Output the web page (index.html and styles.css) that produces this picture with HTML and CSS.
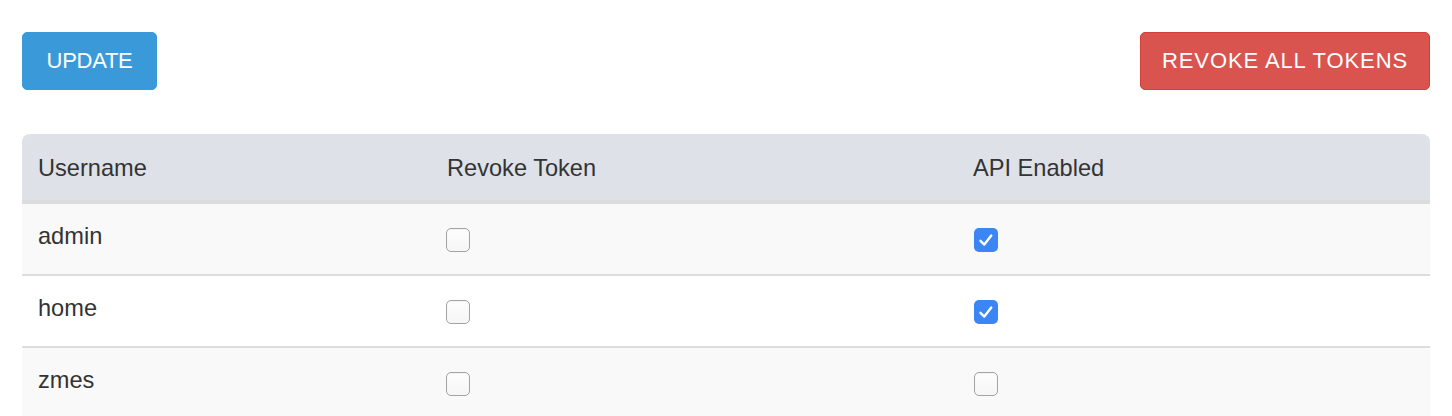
FILE: index.html
```html
<!DOCTYPE html>
<html>
<head>
<meta charset="utf-8">
<link rel="stylesheet" href="styles.css">
</head>
<body>
<div class="page">
  <div class="toolbar">
    <button class="btn btn-blue">UPDATE</button>
    <button class="btn btn-red">REVOKE ALL TOKENS</button>
  </div>
  <table class="tokens">
    <colgroup>
      <col class="c1"><col class="c2"><col class="c3">
    </colgroup>
    <thead>
      <tr><th>Username</th><th>Revoke Token</th><th>API Enabled</th></tr>
    </thead>
    <tbody>
      <tr>
        <td>admin</td>
        <td><span class="cb"></span></td>
        <td><span class="cb on"><svg viewBox="0 0 24 24" width="24" height="24"><path d="M6.5 12.8 L10.3 16.6 L17.3 7.6" fill="none" stroke="#fff" stroke-width="2.4" stroke-linecap="round" stroke-linejoin="round"/></svg></span></td>
      </tr>
      <tr>
        <td>home</td>
        <td><span class="cb"></span></td>
        <td><span class="cb on"><svg viewBox="0 0 24 24" width="24" height="24"><path d="M6.5 12.8 L10.3 16.6 L17.3 7.6" fill="none" stroke="#fff" stroke-width="2.4" stroke-linecap="round" stroke-linejoin="round"/></svg></span></td>
      </tr>
      <tr>
        <td>zmes</td>
        <td><span class="cb"></span></td>
        <td><span class="cb"></span></td>
      </tr>
    </tbody>
  </table>
</div>
</body>
</html>
```
FILE: styles.css
```css
html, body {
  margin: 0;
  padding: 0;
  background: #fff;
}
body {
  font-family: "Liberation Sans", Arial, sans-serif;
  color: #333;
}
.page {
  padding: 32px 22px 0 22px;
}
.toolbar {
  display: flex;
  justify-content: space-between;
  align-items: flex-start;
  margin-bottom: 44px;
}
.btn {
  font-family: "Liberation Sans", Arial, sans-serif;
  font-size: 22px;
  height: 58px;
  padding: 0;
  color: #fff;
  border-radius: 5px;
  border: 1px solid transparent;
  cursor: pointer;
}
.btn-blue {
  background: #3a9ad9;
  border-color: #3a9ad9;
  width: 135px;
  letter-spacing: -0.3px;
}
.btn-red {
  background: #d9534f;
  border-color: #d43f3a;
  width: 290px;
  letter-spacing: 0.9px;
}
.tokens {
  width: 100%;
  border-collapse: separate;
  border-spacing: 0;
  font-size: 23.6px;
  line-height: 32px;
}
.c1 { width: 409px; }
.c2 { width: 526px; }
.c3 { width: 473px; }
.tokens th {
  text-align: left;
  font-weight: normal;
  background: #dee2e8;
  padding: 18px 16px 16px 16px;
  border-bottom: 4px solid #dcdcdc;
}
.tokens th:first-child { border-top-left-radius: 8px; }
.tokens th:last-child { border-top-right-radius: 8px; }
.tokens td {
  padding: 16px 16px 22px 16px;
  vertical-align: top;
  border-bottom: 2px solid #dddddd;
}
.tokens tbody tr:nth-child(odd) td { background: #f9f9f9; }
.tokens tbody tr:nth-child(even) td { background: #fff; }
.cb {
  display: block;
  box-sizing: border-box;
  width: 24px;
  height: 24px;
  margin-top: 8px;
  margin-left: -1px;
  border-radius: 5px;
  border: 1px solid #a3a3a3;
  background: linear-gradient(#fdfdfd, #f6f6f6);
  box-shadow: inset 0 1px 1px rgba(0,0,0,0.04);
}
.tokens td:nth-child(3) .cb { margin-left: 1px; }
.cb.on {
  border: none;
  background: #3b85f5;
  box-shadow: none;
}
.cb svg { display: block; }
```
